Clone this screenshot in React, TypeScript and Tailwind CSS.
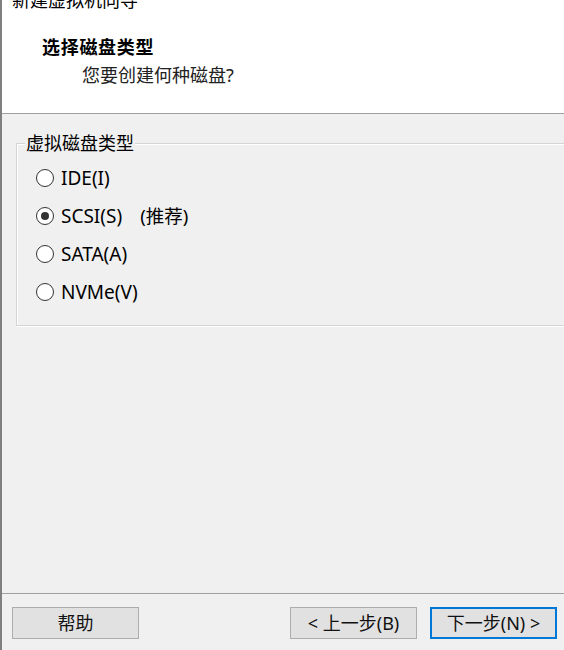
const diskTypes = [
  { label: 'IDE(I)', checked: false },
  { label: 'SCSI(S)', note: '(推荐)', checked: true },
  { label: 'SATA(A)', checked: false },
  { label: 'NVMe(V)', checked: false },
]

function Radio({ checked }: { checked: boolean }) {
  return (
    <span className="w-[18px] h-[18px] rounded-full border border-[#333] bg-white flex items-center justify-center shrink-0">
      {checked && <span className="w-[8px] h-[8px] rounded-full bg-[#333]" />}
    </span>
  )
}

function Button({ children, primary }: { children: React.ReactNode; primary?: boolean }) {
  return (
    <button
      className={
        primary
          ? 'w-[127px] h-[32px] bg-[#e1e1e1] border-2 border-[#0078d7] text-[18px] leading-none text-[#111]'
          : 'w-[127px] h-[32px] bg-[#e1e1e1] border border-[#adadad] text-[18px] leading-none text-[#111]'
      }
    >
      {children}
    </button>
  )
}

export default function App() {
  return (
    <div className="w-[564px] h-[650px] overflow-hidden bg-[#f0f0f0] border-l-2 border-[#7f7f7f] flex flex-col text-black font-['Noto_Sans','Noto_Sans_CJK_SC',sans-serif]">
      <header className="h-[114px] shrink-0 bg-white border-b border-[#a0a0a0]">
        <div className="-mt-[12px] pl-[10px] text-[18px] leading-[24px]">新建虚拟机向导</div>
        <div className="mt-[23px] pl-[40px] text-[18px] leading-[24px] font-bold tracking-[0.7px]">选择磁盘类型</div>
        <div className="mt-[4px] pl-[80px] text-[18px] leading-[24px] text-[#222]">您要创建何种磁盘?</div>
      </header>

      <main className="flex-1 overflow-hidden">
        <div className="relative ml-[14px] mt-[29px] w-[600px] h-[183px] border border-[#d5d5d5] shadow-[inset_1px_1px_0_#fff,1px_1px_0_#fff] pt-[15px] pl-[19px]">
          <span className="absolute -top-[13px] left-[8px] px-[1px] bg-[#f0f0f0] text-[18px] leading-[24px]">
            虚拟磁盘类型
          </span>
          {diskTypes.map((d) => (
            <div key={d.label} className="h-[38px] flex items-center gap-[7px]">
              <Radio checked={d.checked} />
              <span className="text-[19px] leading-[24px]">{d.label}</span>
              {d.note && <span className="ml-[11px] text-[18.5px] leading-[24px]">{d.note}</span>}
            </div>
          ))}
        </div>
      </main>

      <footer className="h-[57px] shrink-0 border-t border-[#a0a0a0] pt-[13px] pl-[10px] pr-[7px] flex items-start">
        <Button>帮助</Button>
        <div className="ml-auto flex gap-[13px]">
          <Button>&lt; 上一步(B)</Button>
          <Button primary>下一步(N) &gt;</Button>
        </div>
      </footer>
    </div>
  )
}
